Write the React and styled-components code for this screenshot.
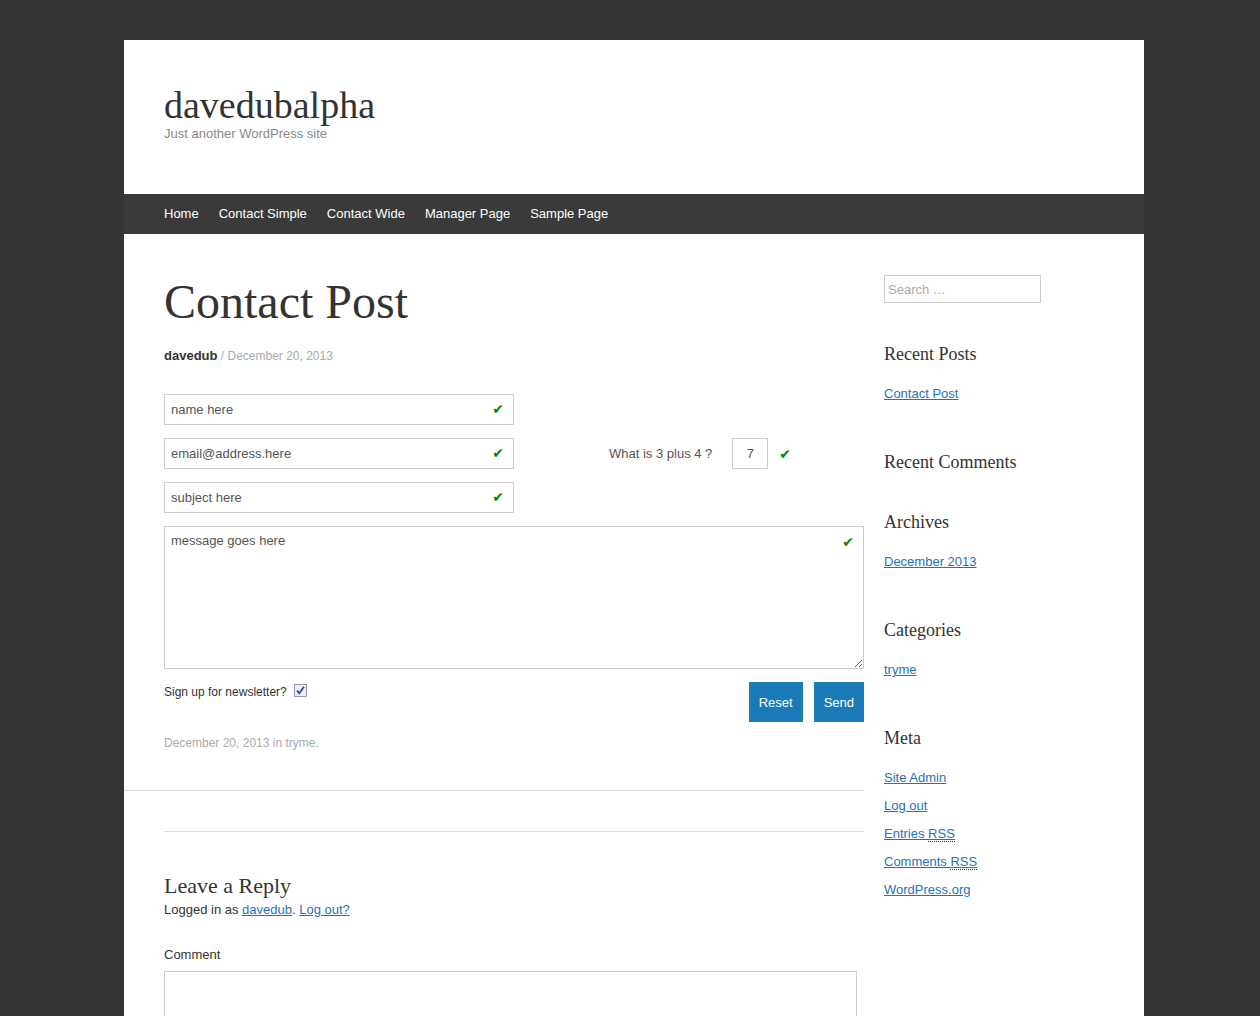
import React from "react"
import styled, { createGlobalStyle } from "styled-components"

const GlobalStyle = createGlobalStyle`
  html, body {
    margin: 0;
    padding: 0;
    background: #353535;
  }
  body {
    font-family: "Liberation Sans", Arial, sans-serif;
    font-size: 13px;
    color: #333;
  }
  * { box-sizing: border-box; }
`

const Page = styled.div`
  width: 1020px;
  margin: 40px 0 0 124px;
  background: #fff;
  height: 976px;
  overflow: hidden;
`
const Header = styled.header`
  height: 154px;
  padding: 46px 40px 0;
`
const SiteTitle = styled.h1`
  margin: 0;
  font-family: "Liberation Serif", Georgia, serif;
  font-weight: normal;
  font-size: 38px;
  line-height: 38px;
  color: #333;
`
const Tagline = styled.p`
  margin: 2px 0 0;
  font-size: 13px;
  line-height: 16px;
  color: #888;
`
const Nav = styled.nav`
  height: 40px;
  background: #3a3a3a;
  padding: 0 40px;
  display: flex;
  gap: 20px;
  a {
    color: #fff;
    text-decoration: none;
    font-size: 13px;
    line-height: 40px;
  }
`
const Body = styled.div`
  display: grid;
  grid-template-columns: 700px 220px;
  column-gap: 20px;
  padding: 40px 40px 0;
`
const Main = styled.main``
const Article = styled.article`
  margin-left: -40px;
  padding: 0 0 38px 40px;
  border-bottom: 1px solid #ddd;
`
const PostTitle = styled.h1`
  margin: 0;
  font-family: "Liberation Serif", Georgia, serif;
  font-weight: normal;
  font-size: 48px;
  line-height: 56px;
  color: #333;
`
const Byline = styled.div`
  margin-top: 17px;
  font-size: 12px;
  line-height: 18px;
  color: #aaa;
  b { color: #333; font-size: 13px; }
`
const Form = styled.form`
  margin-top: 29px;
  display: flex;
  flex-direction: column;
  gap: 13px;
`
const Row = styled.div`
  display: flex;
  align-items: center;
`
const Field = styled.div`
  position: relative;
  width: ${p => p.$w || "350px"};
`
const TextInput = styled.input`
  display: block;
  width: 100%;
  height: 31px;
  border: 1px solid #ccc;
  padding: 0 28px 0 6px;
  font-family: "Liberation Sans", Arial, sans-serif;
  font-size: 13px;
  color: #555;
  outline: none;
`
const TextArea = styled.textarea`
  display: block;
  width: 100%;
  height: ${p => p.$h || "143px"};
  border: 1px solid #ccc;
  padding: 6px 28px 6px 6px;
  font-family: "Liberation Sans", Arial, sans-serif;
  font-size: 13px;
  line-height: 16px;
  color: #555;
  outline: none;
  resize: vertical;
  &::placeholder { color: #555; }
`
const Check = styled.span`
  position: absolute;
  right: 10px;
  top: ${p => p.$top || "8px"};
  color: #080;
  font-family: "DejaVu Sans", sans-serif;
  font-weight: bold;
  font-size: 14px;
  line-height: 14px;
`
const Captcha = styled.div`
  margin-left: 95px;
  display: flex;
  align-items: center;
  color: #555;
`
const CaptchaBox = styled.input`
  width: 36px;
  height: 31px;
  margin-left: 20px;
  border: 1px solid #ccc;
  text-align: center;
  font-family: "Liberation Sans", Arial, sans-serif;
  font-size: 13px;
  color: #555;
  outline: none;
`
const InlineCheck = styled.span`
  margin-left: 11px;
  color: #080;
  font-family: "DejaVu Sans", sans-serif;
  font-weight: bold;
  font-size: 14px;
`
const Actions = styled.div`
  display: flex;
  align-items: flex-start;
  justify-content: space-between;
`
const Newsletter = styled.label`
  display: flex;
  align-items: flex-start;
  gap: 7px;
  font-size: 12px;
  line-height: 18px;
  margin-top: 1px;
`
const Tick = styled.span`
  display: inline-flex;
  width: 13px;
  height: 13px;
  margin-top: 1px;
  border: 1px solid #8e9bb3;
  background: #eef0f5;
`
const Buttons = styled.div`
  display: flex;
  gap: 11px;
`
const Button = styled.button`
  height: 40px;
  padding: 0 10px;
  border: 0;
  background: #1b7bb8;
  color: #fff;
  font-family: "Liberation Sans", Arial, sans-serif;
  font-size: 13px;
`
const EntryMeta = styled.p`
  margin: 12px 0 0;
  font-size: 12px;
  line-height: 18px;
  color: #aaa;
`
const Comments = styled.section`
  margin-top: 40px;
  border-top: 1px solid #ddd;
  padding-top: 41px;
`
const ReplyTitle = styled.h3`
  margin: 0;
  font-family: "Liberation Serif", Georgia, serif;
  font-weight: normal;
  font-size: 22px;
  line-height: 26px;
`
const LoggedIn = styled.p`
  margin: 2px 0 0;
  font-size: 13px;
  line-height: 18px;
  a { color: #1e73be; }
`
const Label = styled.p`
  margin: 27px 0 7px;
  font-size: 13px;
  line-height: 18px;
`
const CommentBox = styled.div`
  width: 693px;
`
const Sidebar = styled.aside``
const Search = styled.input`
  display: block;
  width: 157px;
  height: 28px;
  margin: 1px 0 40px;
  border: 1px solid #ccc;
  padding: 0 3px;
  font-family: "Liberation Sans", Arial, sans-serif;
  font-size: 13px;
  outline: none;
  &::placeholder { color: #aaa; }
`
const Widget = styled.section`
  display: flow-root;
  margin-bottom: 38px;
`
const WidgetTitle = styled.h3`
  margin: 0;
  font-family: "Liberation Serif", Georgia, serif;
  font-weight: normal;
  font-size: 18px;
  line-height: 22px;
`
const List = styled.ul`
  list-style: none;
  margin: 20px 0 0;
  padding: 0;
  li {
    font-size: 13px;
    line-height: 18px;
    margin-bottom: 10px;
  }
  a { color: #1e73be; }
  abbr {
    text-decoration: none;
    border-bottom: 1px dotted #333;
  }
`

const CheckIcon = () => (
  <svg width="11" height="11" viewBox="0 0 11 11">
    <path d="M2 5.5 L4.3 8.3 L9 1.8" fill="none" stroke="#2a4c9c" strokeWidth="1.8" />
  </svg>
)

const widgets = [
  { title: "Recent Posts", items: ["Contact Post"] },
  { title: "Recent Comments", items: [] },
  { title: "Archives", items: ["December 2013"] },
  { title: "Categories", items: ["tryme"] },
]

const App = () => {
  return (
    <>
      <GlobalStyle />
      <Page>
        <Header>
          <SiteTitle>davedubalpha</SiteTitle>
          <Tagline>Just another WordPress site</Tagline>
        </Header>
        <Nav>
          <a href="#">Home</a>
          <a href="#">Contact Simple</a>
          <a href="#">Contact Wide</a>
          <a href="#">Manager Page</a>
          <a href="#">Sample Page</a>
        </Nav>
        <Body>
          <Main>
            <Article>
              <PostTitle>Contact Post</PostTitle>
              <Byline><b>davedub</b> / December 20, 2013</Byline>
              <Form>
                <Row>
                  <Field>
                    <TextInput defaultValue="name here" />
                    <Check>✔</Check>
                  </Field>
                </Row>
                <Row>
                  <Field>
                    <TextInput defaultValue="email@address.here" />
                    <Check>✔</Check>
                  </Field>
                  <Captcha>
                    What is 3 plus 4 ?
                    <CaptchaBox defaultValue="7" />
                    <InlineCheck>✔</InlineCheck>
                  </Captcha>
                </Row>
                <Row>
                  <Field>
                    <TextInput defaultValue="subject here" />
                    <Check>✔</Check>
                  </Field>
                </Row>
                <Field $w="700px">
                  <TextArea placeholder="message goes here" />
                  <Check $top="9px">✔</Check>
                </Field>
                <Actions>
                  <Newsletter>
                    Sign up for newsletter?
                    <Tick><CheckIcon /></Tick>
                  </Newsletter>
                  <Buttons>
                    <Button type="button">Reset</Button>
                    <Button type="button">Send</Button>
                  </Buttons>
                </Actions>
              </Form>
              <EntryMeta>December 20, 2013 in tryme.</EntryMeta>
            </Article>
            <Comments>
              <ReplyTitle>Leave a Reply</ReplyTitle>
              <LoggedIn>
                Logged in as <a href="#">davedub</a>. <a href="#">Log out?</a>
              </LoggedIn>
              <Label>Comment</Label>
              <CommentBox>
                <TextArea $h="120px" />
              </CommentBox>
            </Comments>
          </Main>
          <Sidebar>
            <Search placeholder="Search …" />
            {widgets.map(w => (
              <Widget key={w.title}>
                <WidgetTitle>{w.title}</WidgetTitle>
                {w.items.length > 0 && (
                  <List>
                    {w.items.map(i => (
                      <li key={i}><a href="#">{i}</a></li>
                    ))}
                  </List>
                )}
              </Widget>
            ))}
            <Widget>
              <WidgetTitle>Meta</WidgetTitle>
              <List>
                <li><a href="#">Site Admin</a></li>
                <li><a href="#">Log out</a></li>
                <li><a href="#">Entries <abbr>RSS</abbr></a></li>
                <li><a href="#">Comments <abbr>RSS</abbr></a></li>
                <li><a href="#">WordPress.org</a></li>
              </List>
            </Widget>
          </Sidebar>
        </Body>
      </Page>
    </>
  )
}

export default App
